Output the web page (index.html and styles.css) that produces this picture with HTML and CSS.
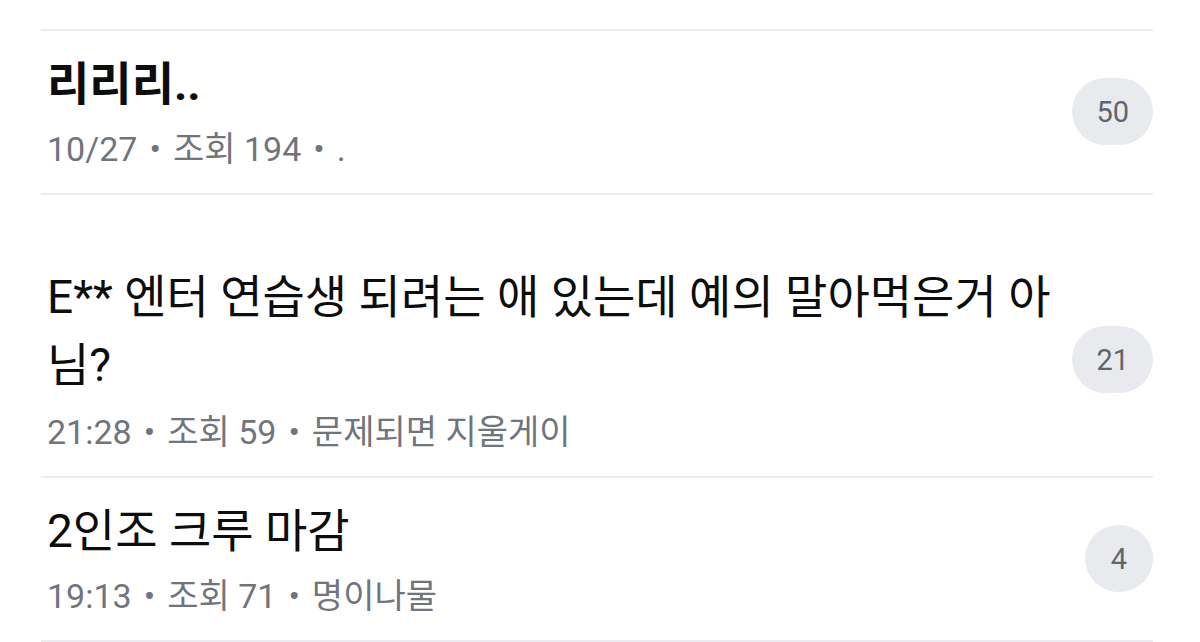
FILE: index.html
```html
<!DOCTYPE html>
<html lang="ko">
<head>
<meta charset="utf-8">
<title>게시글 목록</title>
<link rel="stylesheet" href="styles.css">
</head>
<body>
<ul class="list">
  <li class="item">
    <div class="content">
      <div class="title title--bold">리리리..</div>
      <div class="meta"><span>10/27</span><span class="sep">•</span><span>조회 194</span><span class="sep">•</span><span>.</span></div>
    </div>
    <span class="badge">50</span>
  </li>
  <li class="item item--spaced">
    <div class="content">
      <div class="title">E** 엔터 연습생 되려는 애 있는데 예의 말아먹은거 아님?</div>
      <div class="meta"><span>21:28</span><span class="sep">•</span><span>조회 59</span><span class="sep">•</span><span>문제되면 지울게이</span></div>
    </div>
    <span class="badge">21</span>
  </li>
  <li class="item">
    <div class="content">
      <div class="title">2인조 크루 마감</div>
      <div class="meta"><span>19:13</span><span class="sep">•</span><span>조회 71</span><span class="sep">•</span><span>명이나물</span></div>
    </div>
    <span class="badge">4</span>
  </li>
</ul>
</body>
</html>
```

FILE: styles.css
```css
html, body {
  margin: 0;
  padding: 0;
  background: #ffffff;
}

body {
  font-family: "Roboto", "Noto Sans CJK KR", sans-serif;
  color: #111111;
}

.list {
  list-style: none;
  margin: 29px 47px 0 41px;
  padding: 0;
}

.item {
  display: flex;
  align-items: center;
  border-top: 2px solid #ececee;
  padding: 19px 0 22px 6px;
}

.item:last-child {
  border-bottom: 2px solid #ececee;
}

.item--spaced {
  padding-top: 68px;
}

.content {
  flex: 1;
  min-width: 0;
}

.title {
  font-size: 46px;
  line-height: 68px;
  font-weight: 400;
  color: #0d0d0d;
}

.title--bold {
  font-weight: 700;
}

.meta {
  margin-top: 9px;
  font-size: 34px;
  line-height: 44px;
  color: #70757d;
  white-space: nowrap;
}

.item--spaced .meta {
  margin-top: 11px;
}

.sep {
  display: inline-block;
  margin: 0 12px;
  font-size: 34px;
}

.badge {
  flex: none;
  margin-left: 10px;
  margin-top: 2px;
  min-width: 68px;
  height: 67px;
  padding: 0 6px;
  box-sizing: border-box;
  border-radius: 34px;
  background: #e9eaed;
  color: #5f6570;
  font-size: 29px;
  display: flex;
  align-items: center;
  justify-content: center;
}

.item:first-child .badge,
.item--spaced .badge {
  padding: 0 24px;
}
```
